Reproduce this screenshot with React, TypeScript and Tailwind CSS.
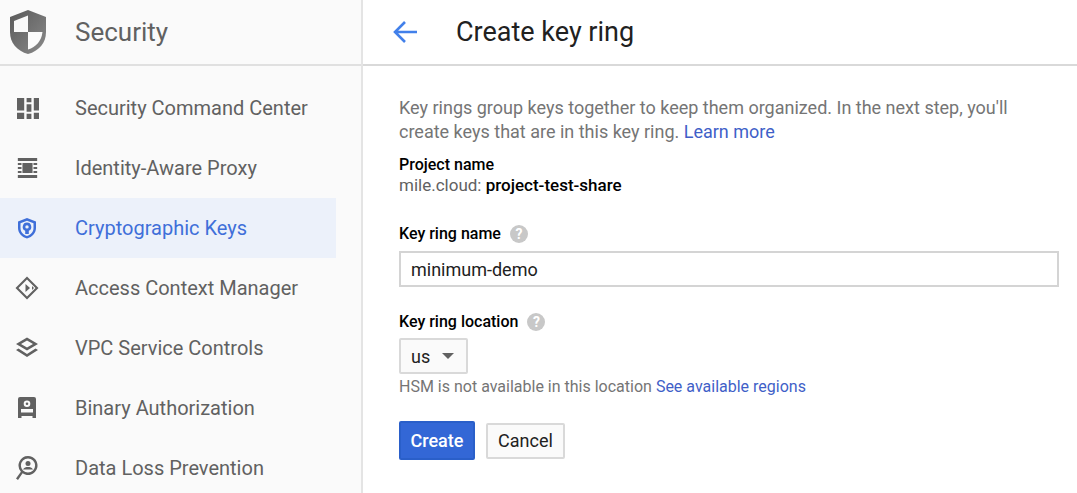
import React from "react";

const g = "#616161";

const Shield = () => (
  <svg width="38" height="46" viewBox="0 0 38 46" className="block">
    <defs>
      <linearGradient id="sg" x1="0" y1="0" x2="1" y2="1">
        <stop offset="0" stopColor="#5a5a5a" />
        <stop offset="1" stopColor="#8a8a8a" />
      </linearGradient>
    </defs>
    <path d="M19 0L37 7V22C37 33 30 41 19 44C8 41 1 33 1 22V7Z" fill="url(#sg)" />
    <path d="M19 5.5L5 11V22H19Z" fill="#fafafa" />
    <path d="M19 22H33.5C32.5 31 27 37 19 39.5Z" fill="#fafafa" />
  </svg>
);

const Icon = ({ children, color = g }: { children: React.ReactNode; color?: string }) => (
  <svg width="24" height="24" viewBox="0 0 24 24" fill={color} className="block">
    {children}
  </svg>
);

const icons: Record<string, React.ReactNode> = {
  scc: (
    <Icon>
      <path d="M0 0h6v12H0zM8 0h4v4H8zM8 6h4v7H8zM14 0h6v12h-6zM15 0h5v12h-5zM0 14h6v6H0zM8 15h4v5H8zM14 14h6v6h-6z" transform="translate(2 2) scale(1.2 1.05)" />
    </Icon>
  ),
  iap: (
    <Icon>
      <path fillRule="evenodd" d="M2 2h21v3H2zM2 19h21v3H2zM2 7h4v2H2zM19 7h4v2h-4zM2 11h4v2H2zM19 11h4v2h-4zM2 15h4v2H2zM19 15h4v2h-4zM7 7h11v10H7z" transform="translate(1 0) scale(.92 1)" />
    </Icon>
  ),
  keys: (
    <Icon color="#3f6fd9">
      <path fillRule="evenodd" d="M12 2l9 3.5v6.5c0 5-3.6 9-9 10.500C6.600 21 3 17 3 12V5.500zM12 4.800L5.500 7.300V12c0 3.800 2.700 6.800 6.500 8 3.800-1.200 6.500-4.200 6.500-8V7.300z" />
      <path fillRule="evenodd" d="M12 6.500a4.300 4.300 0 0 1 1.800 8.200V18h-3.600v-3.300A4.300 4.300 0 0 1 12 6.500zm0 2.700a1.700 1.700 0 1 0 0 3.400 1.700 1.700 0 0 0 0-3.400z" />
    </Icon>
  ),
  acm: (
    <Icon>
      <path fillRule="evenodd" d="M12 .500L23.500 12 12 23.500.500 12zM12 3.500L3.500 12l8.500 8.500 8.500-8.500z" />
      <path d="M10.500 8l4.500 4-4.500 4z" />
      <path d="M17 10l2 2-2 2z" />
    </Icon>
  ),
  vpc: (
    <Icon>
      <path fillRule="evenodd" d="M12 1.500L23 8l-11 6.500L1 8zM12 4.500L6 8l6 3.500L18 8z" />
      <path d="M3.500 12.600L1 14l11 7 11-7-2.500-1.400L12 18z" />
    </Icon>
  ),
  bin: (
    <Icon>
      <path fillRule="evenodd" d="M5 1h14a2 2 0 0 1 2 2v19h-3.500v-2h-11v2H3V3a2 2 0 0 1 2-2zm7 3.500a3.300 3.300 0 1 0 0 6.600 3.300 3.300 0 0 0 0-6.600zm0 2a1.300 1.300 0 1 1 0 2.600 1.300 1.300 0 0 1 0-2.600zM6 13v3.500h12V13z" />
    </Icon>
  ),
  dlp: (
    <Icon>
      <path fillRule="evenodd" d="M13 0a9.500 9.500 0 1 1-5.400 17.300L3 24l-2-1.400 4.900-6.900A9.500 9.500 0 0 1 13 0zm0 2.400a7.100 7.100 0 1 0 0 14.200 7.100 7.100 0 0 0 0-14.200z" />
      <circle cx="13" cy="7.500" r="2.500" />
      <path d="M8 13.500c1-2 3-2.500 5-2.500s4 .5 5 2.500z" />
    </Icon>
  ),
};

const items = [
  ["scc", "Security Command Center"],
  ["iap", "Identity-Aware Proxy"],
  ["keys", "Cryptographic Keys"],
  ["acm", "Access Context Manager"],
  ["vpc", "VPC Service Controls"],
  ["bin", "Binary Authorization"],
  ["dlp", "Data Loss Prevention"],
];

const Help = () => (
  <span className="ml-[9px] flex h-[18px] w-[18px] items-center justify-center rounded-full bg-[#c8c8c8] text-[14px] font-bold leading-none text-white">
    ?
  </span>
);

export default function App() {
  return (
    <div className="flex h-[493px] w-[1077px] overflow-hidden bg-white font-['Roboto',sans-serif]">
      <aside className="h-full w-[363px] shrink-0 border-r-2 border-[#e4e4e4] bg-[#fafafa]">
        <div className="flex h-[66px] items-center border-b-2 border-[#e0e0e0]">
          <div className="ml-[9px] mr-[28px] pt-[2px]">
            <Shield />
          </div>
          <span className="text-[26px] text-[#616161]">Security</span>
        </div>
        <nav className="pt-[12px]">
          {items.map(([k, label]) => {
            const active = k === "keys";
            return (
              <div
                key={k}
                className={`flex h-[60px] w-[336px] items-center ${active ? "bg-[#ecf1fa] text-[#3f6fd9]" : "text-[#616161]"}`}
              >
                <span className="ml-[15px] mr-[36px]">{icons[k]}</span>
                <span className="text-[20px]">{label}</span>
              </div>
            );
          })}
        </nav>
      </aside>
      <main className="min-w-0 flex-1">
        <div className="flex h-[66px] items-center border-b-2 border-[#d9d9d9]">
          <svg width="26" height="24" viewBox="0 0 26 24" className="ml-[29px] mr-[38px]" fill="none" stroke="#4280ea" strokeWidth="2.600">
            <path d="M25 12H3M13 2L3 12l10 10" />
          </svg>
          <h1 className="text-[27px] font-normal text-[#212121]">Create key ring</h1>
        </div>
        <div className="pl-[36px] pr-[18px] pt-[30px]">
          <p className="text-[18px] leading-[24px] text-[#757575]">
            Key rings group keys together to keep them organized. In the next step, you'll
            <br />
            create keys that are in this key ring. <span className="text-[#3f5fc8]">Learn more</span>
          </p>
          <div className="mt-[11px] text-[16px] font-medium leading-[20px] text-black">Project name</div>
          <div className="text-[17px] font-medium leading-[21px] text-black">
            <span className="font-normal text-[#616161]">mile.cloud:</span> project-test-share
          </div>
          <div className="mt-[26px] flex h-[24px] items-center text-[16px] font-medium text-black">
            Key ring name <Help />
          </div>
          <div className="mt-[5px] flex h-[36px] items-center border-2 border-[#d4d4d4] pl-[10px] text-[18px] text-[#212121]">
            minimum-demo
          </div>
          <div className="mt-[23px] flex h-[24px] items-center text-[16px] font-medium text-black">
            Key ring location <Help />
          </div>
          <div className="mt-[4px] flex h-[36px] w-[69px] items-center rounded-[2px] border-2 border-[#d9d9d9] bg-[#fafafa] pl-[10px] text-[18px] text-[#212121]">
            us
            <span className="ml-[12px] h-0 w-0 border-x-[6px] border-t-[6px] border-x-transparent border-t-[#616161]" />
          </div>
          <div className="mt-[1px] text-[16px] leading-[24px] text-[#757575]">
            HSM is not available in this location <span className="text-[#3f5fc8]">See available regions</span>
          </div>
          <div className="mt-[22px] flex items-center gap-[11px]">
            <button className="h-[39px] w-[76px] rounded-[2px] border-2 border-[#2a5fc9] bg-[#3367d6] text-[18px] font-medium text-white">
              Create
            </button>
            <button className="h-[36px] w-[79px] rounded-[2px] border-2 border-[#d9d9d9] bg-[#fafafa] text-[18px] text-[#212121]">
              Cancel
            </button>
          </div>
        </div>
      </main>
    </div>
  );
}
